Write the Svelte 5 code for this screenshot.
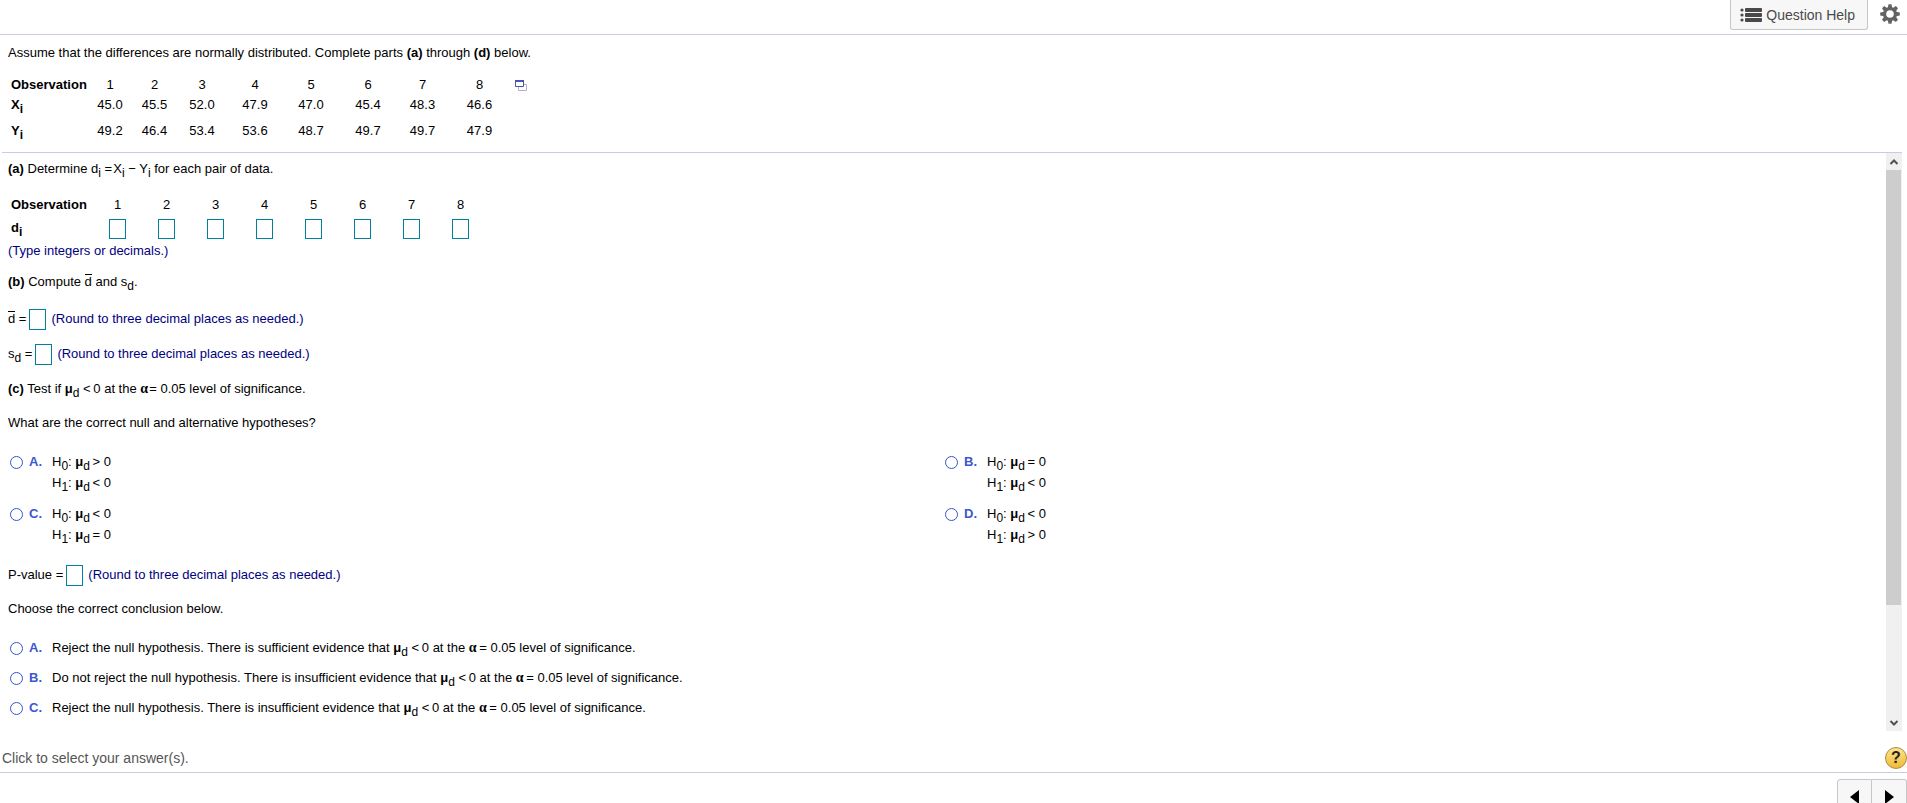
<script lang="ts">
	type Sample = { x: string; y: string; width: number };

	const samples: Sample[] = [
		{ x: '45.0', y: '49.2', width: 44 },
		{ x: '45.5', y: '46.4', width: 45 },
		{ x: '52.0', y: '53.4', width: 50 },
		{ x: '47.9', y: '53.6', width: 56 },
		{ x: '47.0', y: '48.7', width: 56 },
		{ x: '45.4', y: '49.7', width: 58 },
		{ x: '48.3', y: '49.7', width: 51 },
		{ x: '46.6', y: '47.9', width: 63 }
	];

	const hypotheses = [
		{ id: 'A', h0: '>', h1: '<' },
		{ id: 'B', h0: '=', h1: '<' },
		{ id: 'C', h0: '<', h1: '=' },
		{ id: 'D', h0: '<', h1: '>' }
	];

	const conclusions = [
		{ id: 'A', text: 'Reject the null hypothesis. There is sufficient evidence that' },
		{ id: 'B', text: 'Do not reject the null hypothesis. There is insufficient evidence that' },
		{ id: 'C', text: 'Reject the null hypothesis. There is insufficient evidence that' }
	];

	let differences = $state(samples.map(() => ''));
	let meanDiff = $state('');
	let stdDev = $state('');
	let pValue = $state('');
	let hypothesis = $state('');
	let conclusion = $state('');
</script>

{#snippet mu()}<b>μ</b><sub>d</sub>{/snippet}

<div class="player">
	<header>
		<button class="help">
			<svg width="22" height="14" viewBox="0 0 22 14" fill="#4a4a4a" aria-hidden="true">
				<circle cx="2" cy="2" r="1.6" />
				<circle cx="2" cy="7" r="1.6" />
				<circle cx="2" cy="12" r="1.6" />
				<rect x="5" y="0" width="17" height="4" rx="1" />
				<rect x="5" y="5" width="17" height="4" rx="1" />
				<rect x="5" y="10" width="17" height="4" rx="1" />
			</svg>
			Question Help
		</button>
		<button class="gear" aria-label="Settings">
			<svg width="20" height="20" viewBox="-10 -10 20 20" fill="#636363" aria-hidden="true">
				{#each [0, 45, 90, 135] as angle}
					<path d="M-1.5-9.8h3l.8 4v11.6l-.8 4h-3l-.8-4V-5.8z" transform="rotate({angle})" />
				{/each}
				<circle r="7" />
				<circle r="3.8" fill="#fff" />
			</svg>
		</button>
	</header>

	<section class="stem">
		<p>
			Assume that the differences are normally distributed. Complete parts <b>(a)</b> through
			<b>(d)</b> below.
		</p>
		<div class="data-row">
			<table class="data">
				<colgroup>
					<col class="label-col" />
					{#each samples as sample}
						<col style="width: {sample.width}px" />
					{/each}
				</colgroup>
				<tbody>
					<tr>
						<th scope="row">Observation</th>
						{#each samples as _, i}<td>{i + 1}</td>{/each}
					</tr>
					<tr>
						<th scope="row">X<sub>i</sub></th>
						{#each samples as sample}<td>{sample.x}</td>{/each}
					</tr>
					<tr class="last">
						<th scope="row">Y<sub>i</sub></th>
						{#each samples as sample}<td>{sample.y}</td>{/each}
					</tr>
				</tbody>
			</table>
			<button class="popup" aria-label="Open data table">
				<svg width="13" height="12" viewBox="0 0 13 12" fill="none" aria-hidden="true">
					<path d="M3.5 4.5h8v6h-8z" stroke="#a9b1dc" />
					<path d="M.5 1.5h8v5h-8z" fill="#fff" stroke="#4a55a8" />
					<path d="M0 1h9" stroke="#4a55a8" stroke-width="2" />
				</svg>
			</button>
		</div>
	</section>

	<div class="scroller">
		<main>
			<p>
				<b>(a)</b> Determine d<sub>i</sub> =&#8202;X<sub>i</sub> − Y<sub>i</sub> for each pair of data.
			</p>
			<table class="answers">
				<tbody>
					<tr>
						<th scope="row">Observation</th>
						{#each samples as _, i}<td>{i + 1}</td>{/each}
					</tr>
					<tr>
						<th scope="row">d<sub>i</sub></th>
						{#each samples as _, i}
							<td><input type="text" aria-label="d {i + 1}" bind:value={differences[i]} /></td>
						{/each}
					</tr>
				</tbody>
			</table>
			<p class="hint">(Type integers or decimals.)</p>

			<p class="part-b"><b>(b)</b> Compute <span class="bar">d</span> and s<sub>d</sub>.</p>
			<div class="entry">
				<label for="mean"><span class="bar">d</span> =</label>
				<input id="mean" type="text" bind:value={meanDiff} />
				<span class="hint">(Round to three decimal places as needed.)</span>
			</div>
			<div class="entry">
				<label for="sd">s<sub>d</sub> =</label>
				<input id="sd" type="text" bind:value={stdDev} />
				<span class="hint">(Round to three decimal places as needed.)</span>
			</div>

			<p class="part-c">
				<b>(c)</b> Test if {@render mu()} &lt;&#8201;0 at the <b class="alpha">α</b>&#8202;= 0.05 level of significance.
			</p>
			<p>What are the correct null and alternative hypotheses?</p>

			<div class="hypotheses">
				{#each hypotheses as option}
					<label class="choice">
						<input type="radio" name="hypothesis" value={option.id} bind:group={hypothesis} />
						<span class="letter">{option.id}.</span>
						<span class="pair">
							<span>H<sub>0</sub>: {@render mu()}&#8201;{option.h0}&#8201;&#8202;0</span>
							<span>H<sub>1</sub>: {@render mu()}&#8201;{option.h1}&#8201;&#8202;0</span>
						</span>
					</label>
				{/each}
			</div>

			<div class="entry">
				<label for="p-value">P-value =</label>
				<input id="p-value" type="text" bind:value={pValue} />
				<span class="hint">(Round to three decimal places as needed.)</span>
			</div>
			<p class="choose">Choose the correct conclusion below.</p>

			<div class="conclusions">
				{#each conclusions as option}
					<label class="choice">
						<input type="radio" name="conclusion" value={option.id} bind:group={conclusion} />
						<span class="letter">{option.id}.</span>
						<span>
							{option.text} {@render mu()} &lt;&#8201;0 at the <b class="alpha">α</b>&#8201;= 0.05 level of significance.
						</span>
					</label>
				{/each}
			</div>
		</main>

		<div class="scrollbar" aria-hidden="true">
			<svg width="16" height="17" viewBox="0 0 16 17"><path d="M4.5 11 8 7.5l3.5 3.5" /></svg>
			<div class="track"><div class="thumb"></div></div>
			<svg width="16" height="17" viewBox="0 0 16 17"><path d="M4.5 7 8 10.5 11.5 7" /></svg>
		</div>
	</div>

	<div class="status">
		<span>Click to select your answer(s).</span>
		<button class="question" aria-label="Help">?</button>
	</div>

	<footer>
		<button aria-label="Previous">
			<svg width="9" height="14" viewBox="0 0 9 14"><path d="M9 0v14L0 7z" /></svg>
		</button>
		<button aria-label="Next">
			<svg width="9" height="14" viewBox="0 0 9 14"><path d="M0 0v14l9-7z" /></svg>
		</button>
	</footer>
</div>

<style>
	:global(body) {
		margin: 0;
		background: #fff;
	}

	.player {
		display: flex;
		flex-direction: column;
		height: 100vh;
		overflow: hidden;
		font-family: 'Liberation Sans', Arial, sans-serif;
		font-size: 13px;
		line-height: 20px;
		color: #000;
	}

	button {
		padding: 0;
		border: 0;
		background: none;
		font-family: inherit;
		cursor: pointer;
	}

	svg {
		display: block;
	}

	p {
		margin: 0;
	}

	sub {
		font-size: 12px;
		line-height: 0;
		vertical-align: -4px;
	}

	header {
		display: flex;
		flex: none;
		justify-content: flex-end;
		align-items: flex-start;
		gap: 12px;
		height: 34px;
		padding-right: 7px;
		border-bottom: 1px solid #c8cedf;
	}

	.help {
		display: flex;
		align-items: center;
		gap: 4px;
		height: 30px;
		padding: 0 12px 0 9px;
		border: 1px solid #c6c6c6;
		border-top: 0;
		border-radius: 0 0 3px 3px;
		background: #f7f7f7;
		font-size: 14px;
		color: #4a4a4a;
	}

	.gear {
		margin-top: 4px;
	}

	.stem {
		flex: none;
		margin: 0 5px 0 2px;
		padding: 8px 6px 11px;
		border-bottom: 1px solid #c8cedf;
	}

	.data-row {
		display: flex;
		align-items: flex-start;
		margin-top: 12px;
	}

	table {
		border-collapse: collapse;
		table-layout: fixed;
	}

	th,
	td {
		padding: 0;
		text-align: center;
	}

	th {
		padding-left: 3px;
		text-align: left;
	}

	.data {
		width: 503px;
	}

	.label-col {
		width: 80px;
	}

	.last td,
	.last th {
		padding-top: 6px;
	}

	.popup {
		margin: 5px 0 0 4px;
	}

	.scroller {
		display: flex;
		flex: none;
		margin-right: 5px;
	}

	main {
		flex: 1;
		padding: 6px 8px 13px 8px;
	}

	.answers {
		width: 477px;
		margin-top: 16px;
	}

	.answers th {
		width: 82px;
	}

	input[type='text'] {
		box-sizing: border-box;
		display: block;
		width: 17px;
		height: 20px;
		padding: 0 2px;
		border: 1px solid #007f9f;
		background: #fff;
		font: inherit;
	}

	.answers input {
		margin: 4px auto 2px;
	}

	.hint {
		color: #00007f;
	}

	.part-b {
		margin: 11px 0 16px;
	}

	.bar {
		display: inline-block;
		border-top: 1px solid #000;
		line-height: 13px;
	}

	.entry {
		display: flex;
		align-items: center;
		height: 22px;
		margin-bottom: 13px;
	}

	.entry input {
		height: 21px;
		margin: 0 5px 0 3px;
	}

	.part-c {
		margin: 14px 0;
	}

	.alpha {
		font-family: 'Liberation Serif', 'Times New Roman', serif;
		font-size: 14px;
		line-height: 0;
	}

	.hypotheses {
		display: grid;
		grid-template-columns: 1fr 1fr;
		row-gap: 11px;
		margin: 19px 0;
	}

	.choice {
		display: flex;
		align-items: flex-start;
	}

	.choice input {
		appearance: none;
		box-sizing: border-box;
		width: 13px;
		height: 13px;
		margin: 4px 6px 0 2px;
		border: 1px solid #3355cc;
		border-radius: 50%;
	}

	.choice input:checked {
		background: #3355cc;
		box-shadow: inset 0 0 0 3px #fff;
	}

	.letter {
		width: 23px;
		font-weight: bold;
		color: #3c57cf;
	}

	.pair {
		display: flex;
		flex-direction: column;
		gap: 1px;
	}

	.choose {
		margin-bottom: 19px;
	}

	.conclusions {
		display: flex;
		flex-direction: column;
		gap: 10px;
	}

	.scrollbar {
		display: flex;
		flex-direction: column;
		width: 16px;
		background: #f0f0f0;
	}

	.scrollbar path {
		fill: none;
		stroke: #505050;
		stroke-width: 2;
	}

	.track {
		flex: 1;
	}

	.thumb {
		width: 15px;
		height: 80%;
		background: #cdcdcd;
	}

	.status {
		display: flex;
		flex: none;
		justify-content: space-between;
		align-items: center;
		margin-top: 12px;
		padding: 4px 0 3px 2px;
		border-bottom: 1px solid #c8cedf;
		font-size: 14px;
		color: #555;
	}

	.question {
		width: 22px;
		height: 22px;
		border: 1px solid #a98d43;
		border-radius: 50%;
		background: linear-gradient(#ffe48a, #f0b93a);
		font-size: 16px;
		font-weight: bold;
		line-height: 20px;
		color: #222;
	}

	footer {
		display: flex;
		flex: none;
		justify-content: flex-end;
		margin-top: 6px;
	}

	footer button {
		display: flex;
		justify-content: center;
		width: 35px;
		height: 32px;
		padding-top: 10px;
		border: 1px solid #c6c6c6;
		border-radius: 3px 0 0 3px;
		background: #f7f7f7;
	}

	footer button + button {
		border-left: 0;
		border-radius: 0 3px 3px 0;
	}
</style>
